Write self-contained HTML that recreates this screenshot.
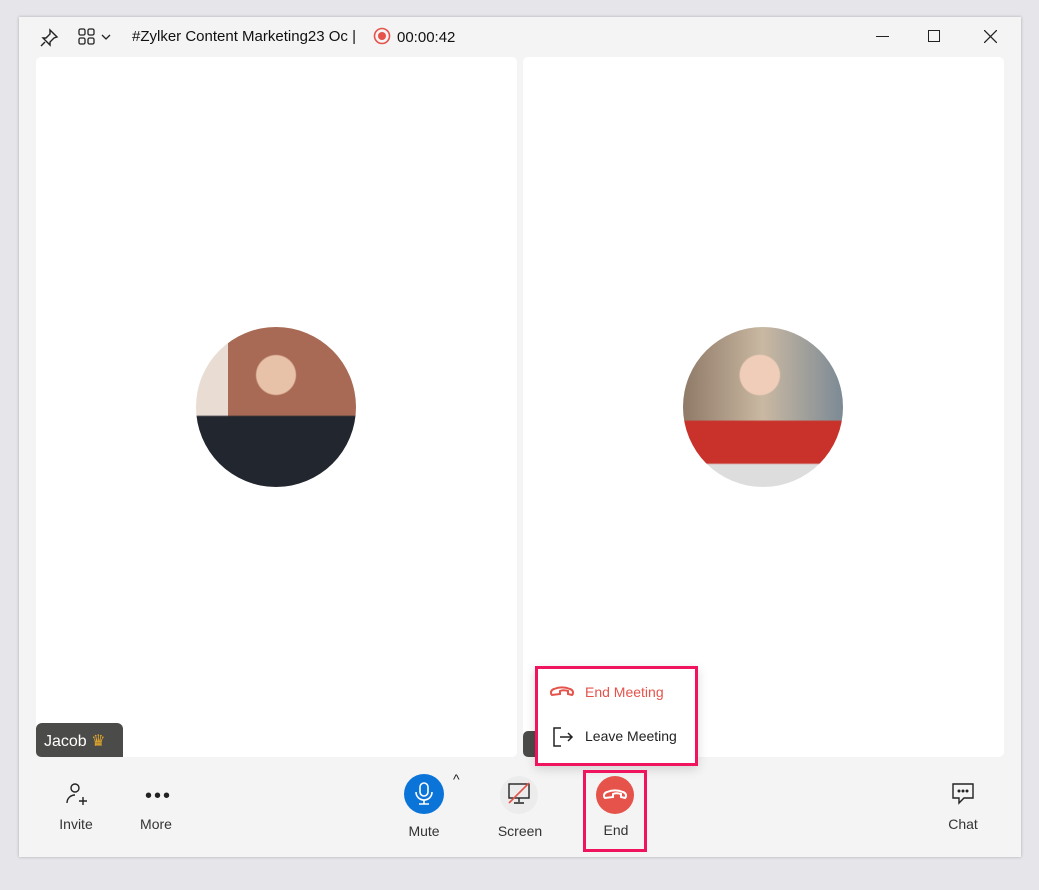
<!DOCTYPE html>
<html><head><meta charset="utf-8"><style>
*{margin:0;padding:0;box-sizing:border-box}
body{width:1039px;height:890px;background:#e6e6ea;font-family:"Liberation Sans","Segoe UI",sans-serif;position:relative;overflow:hidden}
.win{position:absolute;left:19px;top:17px;width:1002px;height:840px;background:#f4f4f4;box-shadow:0 0 3px rgba(0,0,0,.25)}
.abs{position:absolute}
.tile{position:absolute;top:40px;height:700px;background:#fff;border-radius:5px}
.lbl{font-size:14px;color:#333;position:absolute;text-align:center;width:80px}
</style></head><body>
<div class="win">
 <svg class="abs" style="left:20px;top:11px" width="20" height="20" viewBox="0 0 20 20" fill="none" stroke="#222" stroke-width="1.4"><path d="M11 2l7 7-3 1-4 4 0 3-7-7 3 0 4-4z"/><path d="M6 14l-4 4"/></svg>
 <svg class="abs" style="left:59px;top:11px" width="36" height="18" viewBox="0 0 36 18" fill="none" stroke="#222" stroke-width="1.3"><rect x="1" y="1" width="6" height="6" rx="1.5"/><rect x="10" y="1" width="6" height="6" rx="1.5"/><rect x="1" y="10" width="6" height="6" rx="1.5"/><rect x="10" y="10" width="6" height="6" rx="1.5"/><path d="M24 7l4 4 4-4"/></svg>
 <div class="abs" style="left:113px;top:11px;font-size:15px;color:#111">#Zylker Content Marketing23 Oc |</div>
 <svg class="abs" style="left:354px;top:10px" width="18" height="18"><circle cx="9" cy="9" r="7.5" fill="none" stroke="#e5534b" stroke-width="1.6"/><circle cx="9" cy="9" r="4" fill="#e5534b"/></svg>
 <div class="abs" style="left:378px;top:12px;font-size:15px;color:#111">00:00:42</div>
 <div class="abs" style="left:857px;top:19px;width:13px;height:1px;background:#222"></div>
 <div class="abs" style="left:909px;top:13px;width:12px;height:12px;border:1.2px solid #222"></div>
 <svg class="abs" style="left:965px;top:13px" width="13" height="13" stroke="#222" stroke-width="1.3"><path d="M0 0L13 13M13 0L0 13"/></svg>

 <div class="tile" style="left:17px;width:481px"></div>
 <div class="tile" style="left:504px;width:481px"></div>
 <div class="abs" style="left:177px;top:310px;width:160px;height:160px;border-radius:50%;background:radial-gradient(circle at 50% 30%,#e8c2a8 0 14%,transparent 15%),linear-gradient(180deg,transparent 55%,#22262e 56%),linear-gradient(90deg,#e9ddd3 0 20%,#a86a55 20% 100%)"></div>
 <div class="abs" style="left:664px;top:310px;width:160px;height:160px;border-radius:50%;background:radial-gradient(circle at 48% 30%,#f0cdb8 0 14%,transparent 15%),linear-gradient(180deg,transparent 58%,#c8322a 59% 85%,#ddd 86%),linear-gradient(90deg,#8f7a68,#c9b8a2 50%,#7c8a95)"></div>
 <div class="abs" style="left:17px;top:706px;width:87px;height:34px;background:#4b4b49;border-radius:6px 6px 0 5px;color:#fff;font-size:16px;padding:8px 0 0 8px">Jacob <span style="color:#e6a92a">♛</span></div>
 <div class="abs" style="left:504px;top:714px;width:14px;height:26px;background:#4b4b49;border-radius:5px 0 0 5px"></div>

 <!-- popup -->
 <div class="abs" style="left:516px;top:649px;width:163px;height:100px;background:#fff;border:3px solid #f0135e;box-shadow:0 3px 10px rgba(0,0,0,.15)"></div>
 <svg class="abs" style="left:530px;top:668px" width="26" height="14" viewBox="0 0 26 14" fill="none" stroke="#e5534b" stroke-width="2"><path d="M3 10c-2-2-1-5 2-6 5-2 11-2 16 0 3 1 4 4 2 6l-4-1 0-3c-3-1-6-1-8 0l0 3z"/></svg>
 <div class="abs" style="left:566px;top:667px;font-size:14px;color:#e5534b">End Meeting</div>
 <svg class="abs" style="left:532px;top:709px" width="24" height="22" fill="none" stroke="#222" stroke-width="1.5"><path d="M10 2H3v18h7M9 11h12M17 7l4 4-4 4"/></svg>
 <div class="abs" style="left:566px;top:711px;font-size:14px;color:#222">Leave Meeting</div>

 <!-- toolbar -->
 <svg class="abs" style="left:45px;top:764px" width="24" height="26" fill="none" stroke="#222" stroke-width="1.4"><circle cx="11" cy="7" r="4"/><path d="M3 22c0-5 4-8 8-8M15 20h8M19 16v8"/></svg>
 <div class="lbl" style="left:17px;top:799px">Invite</div>
 <div class="abs" style="left:126px;top:768px;font-size:20px;color:#222;letter-spacing:2px">•••</div>
 <div class="lbl" style="left:97px;top:799px">More</div>
 <div class="abs" style="left:385px;top:757px;width:40px;height:40px;border-radius:50%;background:#0a74d9"></div>
 <svg class="abs" style="left:394px;top:765px" width="22" height="24" fill="none" stroke="#fff" stroke-width="1.6"><rect x="7" y="1" width="8" height="13" rx="4"/><path d="M3 10c0 5 4 8 8 8s8-3 8-8M11 18v4M6 22h10"/></svg>
 <div class="abs" style="left:434px;top:754px;font-size:14px;color:#222">^</div>
 <div class="lbl" style="left:365px;top:806px">Mute</div>
 <div class="abs" style="left:481px;top:759px;width:38px;height:38px;border-radius:50%;background:#ececec"></div>
 <svg class="abs" style="left:488px;top:765px" width="24" height="24" fill="none" stroke="#222" stroke-width="1.4"><rect x="2" y="2" width="20" height="14"/><path d="M12 16v4M7 21h10"/><path d="M2 21L22 1" stroke="#e5534b" stroke-width="1.6"/></svg>
 <div class="lbl" style="left:461px;top:806px">Screen</div>
 <div class="abs" style="left:564px;top:753px;width:64px;height:82px;border:3px solid #f0135e"></div>
 <div class="abs" style="left:577px;top:759px;width:38px;height:38px;border-radius:50%;background:#e5534b"></div>
 <svg class="abs" style="left:583px;top:771px" width="26" height="14" viewBox="0 0 26 14" fill="none" stroke="#fff" stroke-width="2"><path d="M3 10c-2-2-1-5 2-6 5-2 11-2 16 0 3 1 4 4 2 6l-4-1 0-3c-3-1-6-1-8 0l0 3z"/></svg>
 <div class="lbl" style="left:557px;top:805px">End</div>
 <svg class="abs" style="left:932px;top:765px" width="24" height="24" fill="none" stroke="#222" stroke-width="1.4"><path d="M2 2h20v14h-9l-5 5v-5H2z"/><circle cx="8" cy="9" r=".8" fill="#222"/><circle cx="12" cy="9" r=".8" fill="#222"/><circle cx="16" cy="9" r=".8" fill="#222"/></svg>
 <div class="lbl" style="left:904px;top:799px">Chat</div>
</div>
</body></html>
